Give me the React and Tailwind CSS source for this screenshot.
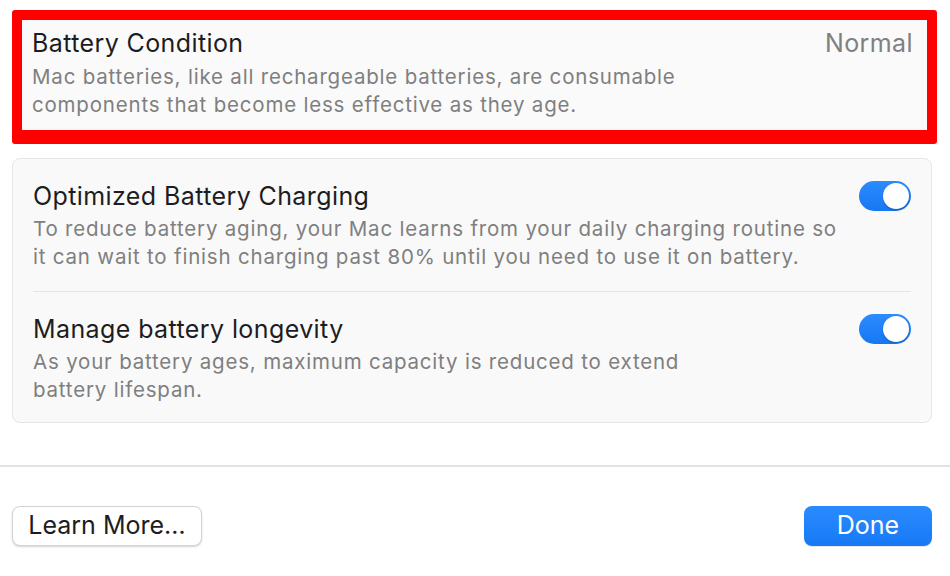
import React from 'react'

function Toggle() {
  return (
    <div className="mt-[-1px] flex h-[30px] w-[52px] shrink-0 items-center justify-end rounded-full bg-gradient-to-b from-[#2b8cff] to-[#1677f2] p-[2px]">
      <div className="h-[26px] w-[26px] rounded-full bg-white shadow-[0_1px_2px_rgba(0,0,0,0.25)]" />
    </div>
  )
}

function SettingRow({ title, children, last }) {
  return (
    <div className={`flex items-start justify-between gap-4 px-[20px] pt-[23px] ${last ? 'pb-[18px]' : 'pb-[20px]'}`}>
      <div>
        <div className="text-[25px] leading-[28px] tracking-[0.4px] text-[#1d1d1f]">{title}</div>
        <div className="mt-[5px] text-[20.5px] leading-[28px] tracking-[0.8px] text-[#7f7f7f]">{children}</div>
      </div>
      <Toggle />
    </div>
  )
}

export default function App() {
  return (
    <div className="h-[576px] w-[950px] overflow-hidden bg-white font-['Inter',sans-serif] antialiased">
      <div className="pl-[12px] pr-[18px] pt-[10px]">
        <div className="mr-[-5px] rounded-[3px] border-[10px] border-b-[14px] border-[#ff0000] bg-[#fafafa] px-[10px] pb-[11px] pt-[9px]">
          <div className="flex items-start justify-between">
            <div className="text-[25px] leading-[28px] tracking-[0.4px] text-[#1d1d1f]">Battery Condition</div>
            <div className="mr-[4px] text-[25px] leading-[28px] tracking-[0.4px] text-[#808080]">Normal</div>
          </div>
          <div className="mt-[6px] text-[20.5px] leading-[28px] tracking-[0.8px] text-[#7f7f7f]">
            Mac batteries, like all rechargeable batteries, are consumable
            <br />
            components that become less effective as they age.
          </div>
        </div>

        <div className="mt-[14px] rounded-[8px] border border-[#e6e6e6] bg-[#f9f9f9]">
          <SettingRow title="Optimized Battery Charging">
            To reduce battery aging, your Mac learns from your daily charging routine so
            <br />
            it can wait to finish charging past 80% until you need to use it on battery.
          </SettingRow>
          <div className="mx-[20px] h-px bg-[#e4e4e4]" />
          <SettingRow title="Manage battery longevity" last>
            As your battery ages, maximum capacity is reduced to extend
            <br />
            battery lifespan.
          </SettingRow>
        </div>
      </div>

      <div className="mt-[42px] h-[2px] bg-[#e3e3e3]" />

      <div className="flex items-center justify-between pl-[12px] pr-[18px] pt-[39px]">
        <button className="h-[40px] w-[190px] rounded-[8px] border border-[#d4d4d4] bg-white text-[25px] text-[#1d1d1f] shadow-[0_1px_2px_rgba(0,0,0,0.18)]">
          Learn More…
        </button>
        <button className="h-[40px] w-[128px] rounded-[8px] bg-gradient-to-b from-[#2a8bff] to-[#1679f5] text-[25px] text-white shadow-[0_1px_1px_rgba(0,0,0,0.1)]">
          Done
        </button>
      </div>
    </div>
  )
}
